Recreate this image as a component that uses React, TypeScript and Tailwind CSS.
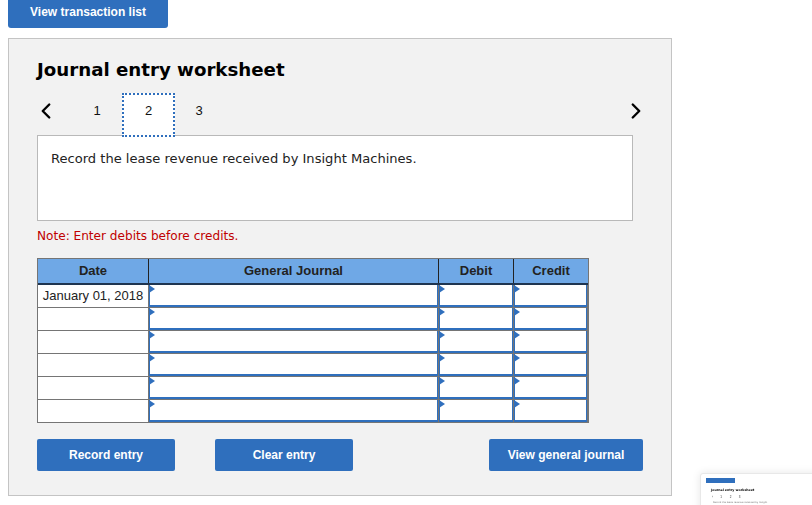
import { ChevronLeft, ChevronRight } from "lucide-react";

const sans = "font-['Liberation_Sans',Arial,sans-serif]";
const verdana = "font-['DejaVu_Sans',Verdana,sans-serif]";

function Cell({ wide }: { wide: string }) {
  return (
    <div className={`relative ${wide} h-[23px] border-r border-b border-[#757575] bg-white`}>
      <div className="h-full border-x border-b-2 border-[#2f6fbd]" />
      <span className="absolute left-0 top-0 h-0 w-0 border-y-[4px] border-l-[6px] border-y-transparent border-l-[#2f6fbd]" />
    </div>
  );
}

function Row({ date }: { date?: string }) {
  return (
    <div className="flex h-[23px]">
      <div className="flex h-[23px] w-[111px] items-center justify-center border-r border-b border-[#757575] bg-white text-[13px] text-[#222]">
        {date}
      </div>
      <Cell wide="w-[290px]" />
      <Cell wide="w-[75px]" />
      <Cell wide="w-[74px]" />
    </div>
  );
}

function Btn({ label, w }: { label: string; w: string }) {
  return (
    <button className={`${w} h-[32px] shrink-0 rounded-[2px] bg-[#2f6fbd] pb-[1px] text-[12px] font-bold text-white`}>
      {label}
    </button>
  );
}

export default function App() {
  return (
    <div className={`relative h-[505px] w-[812px] overflow-hidden bg-white ${sans}`}>
      <div className="px-2">
        <button className="block h-[28px] w-[160px] rounded-b-[3px] bg-[#2f6fbd] pb-[4px] text-[12px] font-bold text-white">
          View transaction list
        </button>

        <div className="mt-[10px] h-[458px] w-[664px] border border-[#c4c4c4] bg-[#f2f2f2] px-[28px] pt-[19px]">
          <h1 className={`${verdana} text-[18.2px] leading-[24px] font-bold text-black`}>Journal entry worksheet</h1>

          {/* tabs */}
          <div className="relative z-10 mt-[11px] flex h-[42px] w-[612px] items-start text-[13px] leading-[16px] text-[#111]">
            <ChevronLeft size={26} strokeWidth={2.2} className="ml-[-4px] mt-[5px] text-black" />
            <span className="ml-[28px] mt-[10px] w-[20px] text-center">1</span>
            <span className="ml-[15px] h-[44px] w-[53px] border-2 border-dotted border-[#2f6fbd] bg-white pt-[8px] text-center">2</span>
            <span className="mt-[10px] w-[48px] text-center">3</span>
            <ChevronRight size={26} strokeWidth={2.2} className="ml-auto mt-[5px] text-black" />
          </div>

          <div className={`h-[86px] w-[596px] border border-[#b9b9b9] bg-white px-[13px] pt-[14px] text-[13.07px] leading-[18px] text-[#222] ${verdana}`}>
            Record the lease revenue received by Insight Machines.
          </div>

          <p className={`mt-[6px] text-[12.1px] leading-[18px] text-[#c00000] ${verdana}`}>Note: Enter debits before credits.</p>

          {/* journal table */}
          <div className="mt-[13px] w-[552px] border border-b-0 border-[#757575]">
            <div className="flex h-[26px] border-b-2 border-[#1f3550] bg-[#6fa8e6] text-[13px] font-bold text-[#222]">
              <div className="flex w-[111px] items-center justify-center border-r border-[#222]">Date</div>
              <div className="flex w-[290px] items-center justify-center border-r border-[#222]">General Journal</div>
              <div className="flex w-[75px] items-center justify-center border-r border-[#222]">Debit</div>
              <div className="flex w-[74px] items-center justify-center">Credit</div>
            </div>
            <Row date="January 01, 2018" />
            <Row />
            <Row />
            <Row />
            <Row />
            <Row />
          </div>

          <div className="mt-[16px] flex w-[606px]">
            <Btn label="Record entry" w="w-[138px]" />
            <Btn label="Clear entry" w="w-[138px] ml-[40px]" />
            <Btn label="View general journal" w="w-[154px] ml-[136px]" />
          </div>
        </div>
      </div>

      {/* floating preview thumbnail */}
      <div className="absolute left-[700px] top-[473px] h-[60px] w-[140px] rounded-[3px] border border-[#e8e8e8] bg-white pl-[5px] pt-[4px] shadow-[0_0_8px_rgba(0,0,0,0.1)]">
        <div className="blur-[0.3px]">
          <div className="h-[5px] w-[29px] bg-[#2f6fbd]" />
          <div className={`mt-[5px] pl-[5px] text-[3.2px] leading-[5px] font-bold text-black ${verdana}`}>Journal entry worksheet</div>
          <div className="mt-[1px] flex pl-[6px] text-[3px] leading-[7px] text-[#333]">
            <span className="w-[5px]">‹</span>
            <span className="w-[8px] bg-white text-center">1</span>
            <span className="ml-[1px] w-[9px] text-center">2</span>
            <span className="w-[9px] text-center">3</span>
          </div>
          <div className={`pl-[7px] text-[2.4px] leading-[4px] text-[#777] ${verdana}`}>Record the lease revenue received by Insight</div>
        </div>
      </div>
    </div>
  );
}
